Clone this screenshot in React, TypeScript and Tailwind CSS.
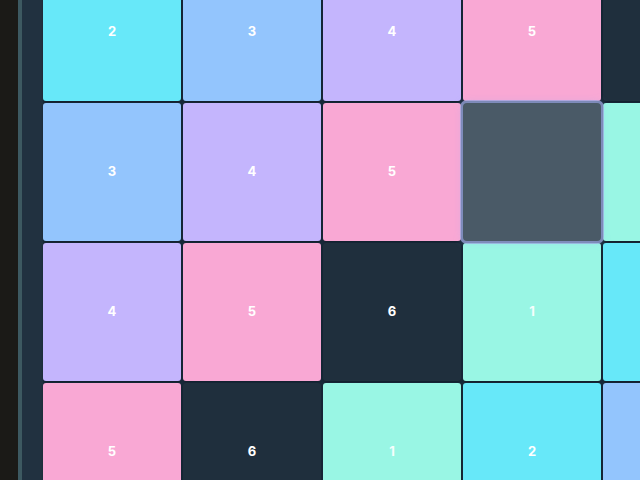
const colors: Record<number, string> = {
  1: "bg-[#99f6e4] text-white/90",
  2: "bg-[#67e8f9] text-white",
  3: "bg-[#93c5fd] text-white",
  4: "bg-[#c4b5fd] text-white",
  5: "bg-[#f9a8d4] text-white",
  6: "bg-[#1f2f3d] text-white",
};

const rows = 4;
const cols = 5;

function Tile({ r, c }: { r: number; c: number }) {
  const value = ((r + c + 1) % 6) + 1;
  const selected = r === 1 && c === 3;

  if (selected) {
    return (
      <div className="w-[138px] h-[138px] rounded-[4px] bg-[#4a5a67] ring-[3px] ring-[#9aa6dc]/75 shadow-[0_0_10px_rgba(165,180,252,0.4)] z-10" />
    );
  }

  return (
    <div
      className={`w-[138px] h-[138px] rounded-[3px] flex items-center justify-center font-bold text-[13px] shadow-[0_1px_2px_rgba(0,0,0,0.25)] ${colors[value]}`}
    >
      {value}
    </div>
  );
}

export default function App() {
  const cells = [];
  for (let r = 0; r < rows; r++) {
    for (let c = 0; c < cols; c++) {
      cells.push(<Tile key={`${r}-${c}`} r={r} c={c} />);
    }
  }

  return (
    <div
      className="w-[640px] h-[480px] flex overflow-hidden bg-[#1b1a17]"
      style={{ fontFamily: "Inter, 'Liberation Sans', sans-serif" }}
    >
      <div className="w-[18px] shrink-0" />
      <div className="w-[4px] shrink-0 bg-[#3d5961]" />
      <div className="flex-1 bg-[#213140] overflow-hidden pl-[21px]">
        <div className="grid grid-cols-[repeat(5,138px)] gap-[2px] -mt-[37px] bg-[#18293a] w-max">
          {cells}
        </div>
      </div>
    </div>
  );
}
